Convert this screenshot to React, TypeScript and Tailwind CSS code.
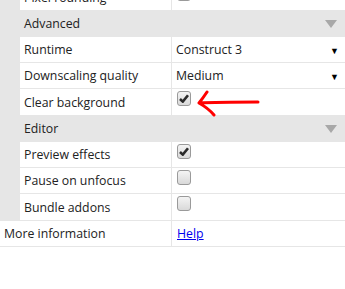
import React from "react";

function Checkbox({ checked }: { checked?: boolean }) {
  return (
    <div className="mt-[2px] ml-[5px] w-[14px] h-[15px] rounded-[3px] border border-[#9a9a9a] bg-gradient-to-b from-[#f4f4f4] to-[#d9d9d9] flex items-center justify-center">
      {checked && (
        <svg width="10" height="9" viewBox="0 0 10 9">
          <path d="M1 5 L3.8 7.6 L9 1.2" fill="none" stroke="#2a2a2a" strokeWidth="2.6" />
        </svg>
      )}
    </div>
  );
}

function Header({ title }: { title: string }) {
  return (
    <div className="flex items-center justify-between h-[27px] bg-[#e6e6e6] pl-[4px] pr-[8px]">
      <span className="pt-[2px]">{title}</span>
      <svg width="12" height="8" viewBox="0 0 12 8">
        <path d="M0 0 H12 L6 8 Z" fill="#a8a8a8" />
      </svg>
    </div>
  );
}

function Row({
  label,
  children,
  className = "",
}: {
  label: string;
  children?: React.ReactNode;
  className?: string;
}) {
  return (
    <div className={"relative flex h-[26px] bg-white border-b border-[#e6e6e6] " + className}>
      <div className="w-[152px] pl-[4px] pt-[2px] flex items-center border-r border-[#e6e6e6]">{label}</div>
      <div className="flex-1">{children}</div>
    </div>
  );
}

function SelectValue({ value }: { value: string }) {
  return (
    <div className="flex items-center justify-between h-full pl-[4px] pr-[6px] pt-[2px]">
      <span>{value}</span>
      <span className="text-[9px] text-black">▼</span>
    </div>
  );
}

export default function App() {
  return (
    <div
      className="w-[345px] h-[289px] overflow-hidden bg-white text-[12.3px] text-[#222]"
      style={{ fontFamily: '"Open Sans", "Noto Sans", sans-serif' }}
    >
      <div className="flex -mt-[16px]">
        <div className="w-[20px] bg-[#e6e6e6]" />
        <div className="flex-1">
          <Row label="Pixel rounding" className="border-b-0">
            <Checkbox />
          </Row>
          <Header title="Advanced" />
          <Row label="Runtime">
            <SelectValue value="Construct 3" />
          </Row>
          <Row label="Downscaling quality">
            <SelectValue value="Medium" />
          </Row>
          <Row label="Clear background" className="border-b-0">
            <Checkbox checked />
            <svg
              className="absolute left-[176px] top-0"
              width="70"
              height="28"
              viewBox="0 0 70 28"
            >
              <path
                d="M3 14 Q20 13 62 13 M11 3 Q7 9 3 14 Q12 19 18 26"
                fill="none"
                stroke="#ff0000"
                strokeWidth="3"
                strokeLinecap="round"
                strokeLinejoin="round"
              />
            </svg>
          </Row>
          <Header title="Editor" />
          <Row label="Preview effects">
            <Checkbox checked />
          </Row>
          <Row label="Pause on unfocus">
            <Checkbox />
          </Row>
          <Row label="Bundle addons" className="border-b-0">
            <Checkbox />
          </Row>
        </div>
      </div>
      <div className="flex h-[27px] border-t border-b border-[#e6e6e6]">
        <div className="w-[172px] pl-[4px] pt-[2px] flex items-center border-r border-[#e6e6e6]">More information</div>
        <div className="flex-1 pl-[5px] pt-[2px] flex items-center">
          <a href="#" className="text-[#0000ee] underline">
            Help
          </a>
        </div>
      </div>
    </div>
  );
}
